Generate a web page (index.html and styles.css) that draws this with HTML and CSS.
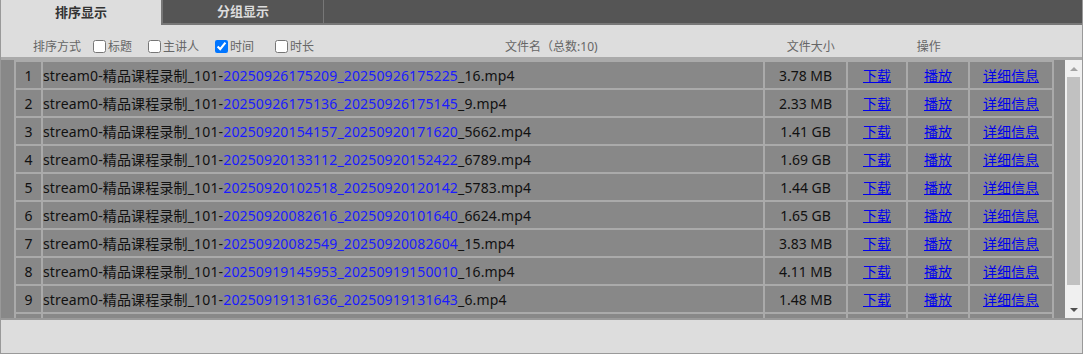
FILE: index.html
```html
<!DOCTYPE html>
<html>
    <head>
        <meta charset="UTF-8" />
        <title>录制文件</title>
        <link rel="stylesheet" href="styles.css">
    </head>
    <body>
    <div class="page">
        <div class="tabs">
            <div class="tab active">排序显示</div>
            <div class="tab">分组显示</div>
            <div class="tab-fill"></div>
        </div>

        <div class="sortbar">
            <span class="sort-label">排序方式</span>
            <label class="opt opt-title"><input type="checkbox">标题</label>
            <label class="opt opt-speaker"><input type="checkbox">主讲人</label>
            <label class="opt opt-time"><input type="checkbox" checked>时间</label>
            <label class="opt"><input type="checkbox">时长</label>
            <span class="head-name">文件名（总数:10)</span>
            <span class="head-size">文件大小</span>
            <span class="head-op">操作</span>
        </div>

        <div class="list">
            <div class="list-body">
                <table class="files">
                    <tr>
                        <td class="num">1</td>
                        <td class="name">stream0-精品课程录制_101-<span class="stamp">20250926175209_20250926175225</span>_16.mp4</td>
                        <td class="size">3.78 MB</td>
                        <td class="act dl"><a href="#">下载</a></td>
                        <td class="act play"><a href="#">播放</a></td>
                        <td class="act info"><a href="#">详细信息</a></td>
                    </tr>
                    <tr>
                        <td class="num">2</td>
                        <td class="name">stream0-精品课程录制_101-<span class="stamp">20250926175136_20250926175145</span>_9.mp4</td>
                        <td class="size">2.33 MB</td>
                        <td class="act"><a href="#">下载</a></td>
                        <td class="act"><a href="#">播放</a></td>
                        <td class="act"><a href="#">详细信息</a></td>
                    </tr>
                    <tr>
                        <td class="num">3</td>
                        <td class="name">stream0-精品课程录制_101-<span class="stamp">20250920154157_20250920171620</span>_5662.mp4</td>
                        <td class="size">1.41 GB</td>
                        <td class="act"><a href="#">下载</a></td>
                        <td class="act"><a href="#">播放</a></td>
                        <td class="act"><a href="#">详细信息</a></td>
                    </tr>
                    <tr>
                        <td class="num">4</td>
                        <td class="name">stream0-精品课程录制_101-<span class="stamp">20250920133112_20250920152422</span>_6789.mp4</td>
                        <td class="size">1.69 GB</td>
                        <td class="act"><a href="#">下载</a></td>
                        <td class="act"><a href="#">播放</a></td>
                        <td class="act"><a href="#">详细信息</a></td>
                    </tr>
                    <tr>
                        <td class="num">5</td>
                        <td class="name">stream0-精品课程录制_101-<span class="stamp">20250920102518_20250920120142</span>_5783.mp4</td>
                        <td class="size">1.44 GB</td>
                        <td class="act"><a href="#">下载</a></td>
                        <td class="act"><a href="#">播放</a></td>
                        <td class="act"><a href="#">详细信息</a></td>
                    </tr>
                    <tr>
                        <td class="num">6</td>
                        <td class="name">stream0-精品课程录制_101-<span class="stamp">20250920082616_20250920101640</span>_6624.mp4</td>
                        <td class="size">1.65 GB</td>
                        <td class="act"><a href="#">下载</a></td>
                        <td class="act"><a href="#">播放</a></td>
                        <td class="act"><a href="#">详细信息</a></td>
                    </tr>
                    <tr>
                        <td class="num">7</td>
                        <td class="name">stream0-精品课程录制_101-<span class="stamp">20250920082549_20250920082604</span>_15.mp4</td>
                        <td class="size">3.83 MB</td>
                        <td class="act"><a href="#">下载</a></td>
                        <td class="act"><a href="#">播放</a></td>
                        <td class="act"><a href="#">详细信息</a></td>
                    </tr>
                    <tr>
                        <td class="num">8</td>
                        <td class="name">stream0-精品课程录制_101-<span class="stamp">20250919145953_20250919150010</span>_16.mp4</td>
                        <td class="size">4.11 MB</td>
                        <td class="act"><a href="#">下载</a></td>
                        <td class="act"><a href="#">播放</a></td>
                        <td class="act"><a href="#">详细信息</a></td>
                    </tr>
                    <tr>
                        <td class="num">9</td>
                        <td class="name">stream0-精品课程录制_101-<span class="stamp">20250919131636_20250919131643</span>_6.mp4</td>
                        <td class="size">1.48 MB</td>
                        <td class="act"><a href="#">下载</a></td>
                        <td class="act"><a href="#">播放</a></td>
                        <td class="act"><a href="#">详细信息</a></td>
                    </tr>
                    <tr>
                        <td class="num">10</td>
                        <td class="name">stream0-精品课程录制_101-<span class="stamp">20250919100512_20250919100530</span>_8.mp4</td>
                        <td class="size">2.02 MB</td>
                        <td class="act"><a href="#">下载</a></td>
                        <td class="act"><a href="#">播放</a></td>
                        <td class="act"><a href="#">详细信息</a></td>
                    </tr>
                </table>
            </div>
            <div class="scrollbar">
                <div class="arrow up"></div>
                <div class="track"><div class="thumb"></div></div>
                <div class="arrow down"></div>
            </div>
        </div>

        <div class="footer"></div>
    </div>
    </body>
</html>
```

FILE: styles.css
```css
    body{
        margin: 0;
        background-color: #dddddd;
        font-family: "Noto Sans", "Noto Sans CJK SC", sans-serif;
    }
    .page{
        width: 1081px;
        height: 353px;
        border-left: 1px solid #999999;
        border-right: 1px solid #999999;
        border-bottom: 1px solid #999999;
        display: flex;
        flex-direction: column;
        overflow: hidden;
    }
    .tabs{
        display: flex;
        height: 25px;
        background-color: #555555;
        flex-shrink: 0;
    }
    .tab{
        width: 160px;
        font-size: 13px;
        font-weight: bold;
        color: #dddddd;
        text-align: center;
        line-height: 23px;
        border-left: 2px solid #777777;
        border-right: 1px solid #777777;
        border-bottom: 2px solid #777777;
    }
    .tab.active{
        background-color: #dddddd;
        color: #333333;
        border: none;
        line-height: 25px;
    }
    .tab-fill{
        flex: 1;
        border-bottom: 2px solid #777777;
    }
    .sortbar{
        display: flex;
        align-items: center;
        height: 22px;
        padding: 10px 0 0 32px;
        font-size: 12px;
        color: #666666;
        flex-shrink: 0;
    }
    .sort-label{
        margin-right: 9px;
    }
    .opt{
        display: flex;
        align-items: center;
        margin-right: 13px;
    }
    .opt input{
        width: 13px;
        height: 13px;
        margin: 0 2px 0 3px;
    }
    .opt-time{
        margin-right: 18px;
    }
    .head-name{
        margin-left: 178px;
    }
    .head-size{
        margin-left: 189px;
    }
    .head-op{
        margin-left: 82px;
    }
    .list{
        display: flex;
        height: 258px;
        background-color: #888888;
        border-top: 3px solid #aaaaaa;
        flex-shrink: 0;
    }
    .list-body{
        width: 1050px;
        overflow: hidden;
        padding-left: 13px;
    }
    .files{
        border-collapse: separate;
        border-spacing: 2px;
        background-color: #aaaaaa;
        width: 1040px;
        table-layout: fixed;
        font-size: 14px;
        color: #111111;
    }
    .files td{
        background-color: #888888;
        height: 26px;
        padding: 0;
        white-space: nowrap;
        overflow: hidden;
    }
    .num{
        width: 25px;
        text-align: center;
    }
    .name{
        width: 720px;
        letter-spacing: 0.15px;
    }
    .stamp{
        color: #1a1aff;
    }
    .size{
        width: 81px;
        text-align: center;
    }
    .act{
        text-align: center;
    }
    .dl{
        width: 58px;
    }
    .play{
        width: 60px;
    }
    .info{
        width: 82px;
    }
    .act a{
        color: #0000ee;
    }
    .scrollbar{
        width: 17px;
        margin-left: 1px;
        background-color: #f0f0f0;
        display: flex;
        flex-direction: column;
    }
    .arrow{
        height: 17px;
        display: flex;
        align-items: center;
        justify-content: center;
    }
    .arrow.up::before{
        content: "";
        border-left: 4px solid transparent;
        border-right: 4px solid transparent;
        border-bottom: 4px solid #a3a3a3;
    }
    .arrow.down::before{
        content: "";
        border-left: 4px solid transparent;
        border-right: 4px solid transparent;
        border-top: 4px solid #505050;
    }
    .track{
        flex: 1;
        padding: 0 2px;
    }
    .thumb{
        height: 208px;
        background-color: #c1c1c1;
    }
    .footer{
        flex: 1;
        border-top: 2px solid #999999;
    }
```
